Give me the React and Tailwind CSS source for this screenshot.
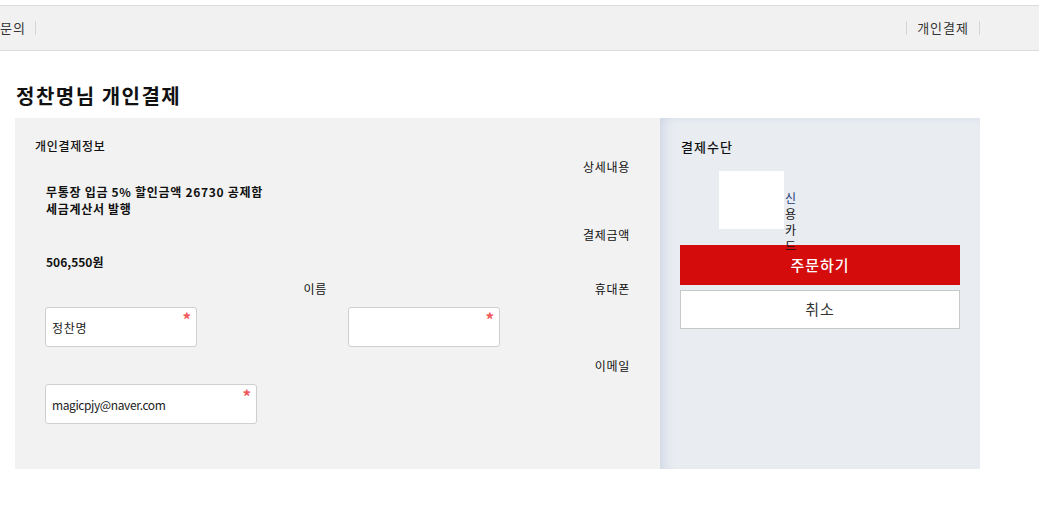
export default function App() {
  const font = { fontFamily: '"Noto Sans CJK KR", "Noto Sans", sans-serif' };
  return (
    <div className="w-[1039px] h-[522px] bg-white text-[#111]" style={font}>
      <div className="h-[5px]" />
      <div className="h-[46px] bg-[#f1f1f1] border-y border-[#dcdcdc] flex items-center justify-between text-[13px] text-[#333] tracking-[1px]">
        <div className="flex items-center">
          <span>문의</span>
          <span className="ml-[9px] w-px h-[14px] bg-[#d5d5d5]" />
        </div>
        <div className="flex items-center mr-[59px]">
          <span className="w-px h-[14px] bg-[#d5d5d5]" />
          <span className="ml-[10px] mr-[10px]">개인결제</span>
          <span className="w-px h-[14px] bg-[#d5d5d5]" />
        </div>
      </div>
      <h1 className="ml-[16px] mt-[31px] h-[36px] text-[20px] font-bold leading-[28px] text-[#111] tracking-[1.5px]">정찬명님 개인결제</h1>
      <div className="ml-[15px] flex w-[965px] h-[351px]">
        <div className="w-[645px] bg-[#f2f2f2] pl-[20px] pr-[30px] pt-[19px] text-[12px] leading-[17px] tracking-[0.7px]">
          <div className="h-[17px] font-medium">개인결제정보</div>
          <div className="mt-[4px] text-right h-[17px]">상세내용</div>
          <div className="mt-[8px] ml-[11px] font-bold">
            <div>무통장 입금 5% 할인금액 26730 공제함</div>
            <div>세금계산서 발행</div>
          </div>
          <div className="mt-[9px] text-right h-[17px]">결제금액</div>
          <div className="mt-[10px] ml-[11px] font-bold h-[17px] tracking-normal">506,550원</div>
          <div className="mt-[10px] flex h-[17px]">
            <div className="w-[292px] text-right">이름</div>
            <div className="flex-1 text-right">휴대폰</div>
          </div>
          <div className="mt-[10px] flex">
            <Field className="ml-[10px] w-[152px]" value="정찬명" />
            <Field className="ml-[151px] w-[152px]" value="" />
          </div>
          <div className="mt-[10px] text-right h-[17px]">이메일</div>
          <div className="mt-[10px]">
            <Field className="ml-[10px] w-[212px] tracking-[-0.4px]" value="magicpjy@naver.com" />
          </div>
        </div>
        <div className="w-[320px] bg-[#e9edf2] shadow-[inset_12px_0_12px_-8px_rgba(120,140,180,0.22),inset_0_6px_8px_-6px_rgba(120,140,180,0.12)] pl-[20px] pr-[20px] pt-[19px]">
          <div className="ml-[1px] h-[19px] text-[13px] leading-[19px] font-medium text-[#111] tracking-[1px]">결제수단</div>
          <div className="relative h-[74px] mt-[15px]">
            <div className="absolute left-[39px] top-0 w-[65px] h-[58px] bg-white" />
            <div className="absolute left-[105px] top-[19px] w-[13px] text-[12px] leading-[16px] break-all z-10 text-[#111]">
              <span className="text-[#1a3a7a]">신</span>용카드
            </div>
          </div>
          <button className="block w-[280px] h-[40px] bg-[#d40c0c] text-white text-[15px] font-medium tracking-[1px]">주문하기</button>
          <button className="mt-[5px] block w-[280px] h-[39px] bg-white border border-[#c8c8c8] text-[15px] text-[#333] tracking-[1px]">취소</button>
        </div>
      </div>
    </div>
  );
}

function Field({ className, value }) {
  return (
    <div className={"relative h-[40px] bg-white border border-[#cfcfcf] rounded-[3px] flex items-center pl-[6px] text-[12px] text-[#222] " + className}>
      <span>{value}</span>
      <span className="absolute right-[5px] top-[2px] text-[17px] leading-[17px] font-bold text-[#f25a5a] tracking-normal">*</span>
    </div>
  );
}
